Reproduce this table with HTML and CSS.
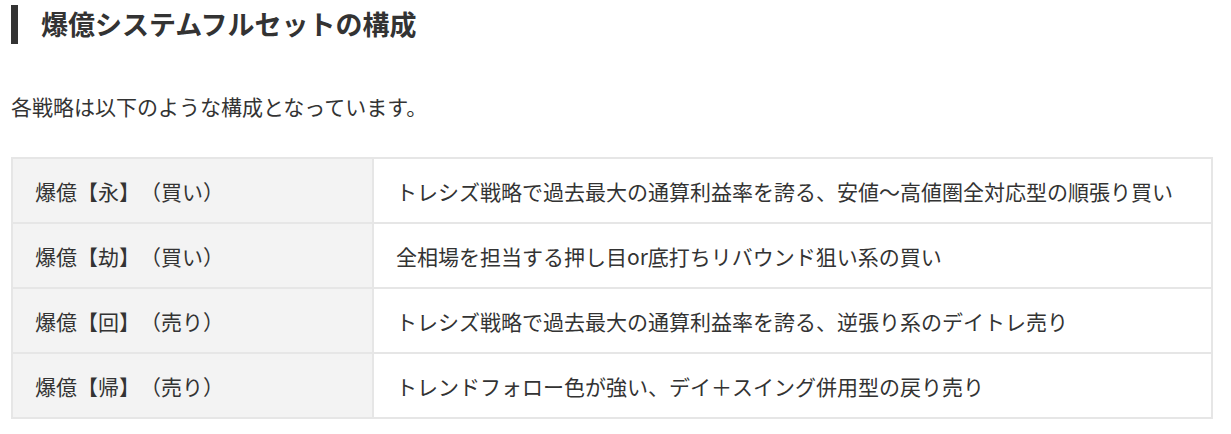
FILE: index.html
```html
<!DOCTYPE html>
<html lang="ja">
<head>
<meta charset="UTF-8">
<meta name="viewport" content="width=device-width, initial-scale=1.0">
<title>爆億システムフルセットの構成</title>
<link rel="stylesheet" href="styles.css">
</head>
<body>
<div id="wrap">
    <h2 class="title">爆億システムフルセットの構成</h2>
    <p class="lead">各戦略は以下のような構成となっています。</p>
    <table class="lineup">
        <tr>
            <th>爆億【永】（買い）</th>
            <td>トレシズ戦略で過去最大の通算利益率を誇る、安値〜高値圏全対応型の順張り買い</td>
        </tr>
        <tr>
            <th>爆億【劫】（買い）</th>
            <td>全相場を担当する押し目or底打ちリバウンド狙い系の買い</td>
        </tr>
        <tr>
            <th>爆億【回】（売り）</th>
            <td>トレシズ戦略で過去最大の通算利益率を誇る、逆張り系のデイトレ売り</td>
        </tr>
        <tr>
            <th>爆億【帰】（売り）</th>
            <td>トレンドフォロー色が強い、デイ＋スイング併用型の戻り売り</td>
        </tr>
    </table>
</div>
</body>
</html>
```

FILE: styles.css
```css
body {
    margin: 0;
    background: #fff;
    color: #333;
    font-family: "Noto Sans CJK JP", "Noto Sans", sans-serif;
    text-spacing-trim: space-all;
}
#wrap {
    padding: 5px 18px 0 11px;
}
.title {
    margin: 0;
    padding-left: 23px;
    border-left: 7px solid #333;
    font-size: 27px;
    line-height: 37px;
    padding-bottom: 2px;
    font-weight: bold;
    color: #333;
}
.lead {
    margin: 42px 0 31px;
    font-size: 21px;
    line-height: 40px;
}
.lineup {
    width: 1202px;
    border-collapse: collapse;
    border: 2px solid #e6e6e6;
    font-size: 21px;
}
.lineup th,
.lineup td {
    height: 63px;
    padding: 0 12px 0 22px;
    border: 2px solid #e6e6e6;
    text-align: left;
    font-weight: normal;
    white-space: nowrap;
}
.lineup th {
    width: 325px;
    background: #f3f3f3;
}
```
